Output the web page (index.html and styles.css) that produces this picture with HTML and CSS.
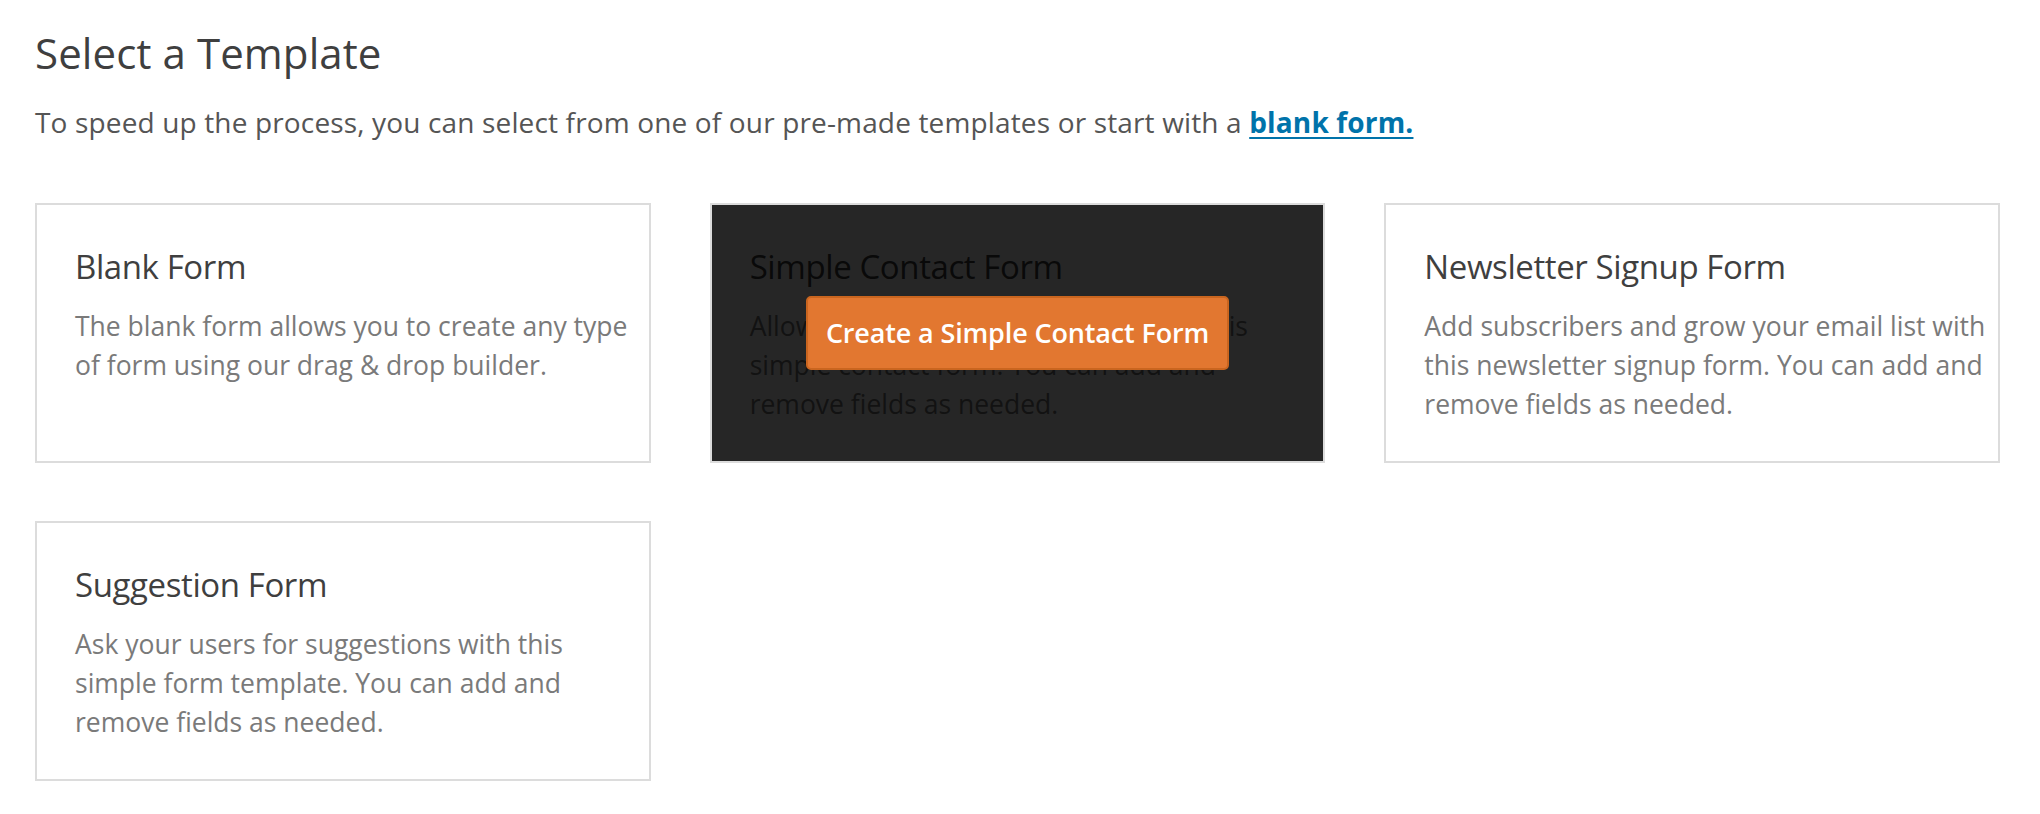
FILE: index.html
```html
<!DOCTYPE html>
<html lang="en">
  <head>
    <meta charset="UTF-8" />
    <meta name="viewport" content="width=device-width, initial-scale=1.0" />
    <title>Select a Template</title>
    <link rel="stylesheet" href="styles.css">
  </head>
  <body>
    <main class="page">
      <h1 class="page-title">Select a Template</h1>
      <p class="page-intro">
        To speed up the process, you can select from one of our pre-made templates or start with a
        <a href="#" class="blank-link">blank form.</a>
      </p>

      <section class="template-grid">
        <div class="template-card">
          <h3>Blank Form</h3>
          <p>The blank form allows you to create any type of form using our drag &amp; drop builder.</p>
        </div>

        <div class="template-card is-selected">
          <h3>Simple Contact Form</h3>
          <p>Allow your users to contact you with this simple contact form. You can add and remove fields as needed.</p>
          <div class="template-overlay">
            <button type="button">Create a Simple Contact Form</button>
          </div>
        </div>

        <div class="template-card">
          <h3>Newsletter Signup Form</h3>
          <p>Add subscribers and grow your email list with this newsletter signup form. You can add and remove fields as needed.</p>
        </div>

        <div class="template-card">
          <h3>Suggestion Form</h3>
          <p>Ask your users for suggestions with this simple form template. You can add and remove fields as needed.</p>
        </div>
      </section>
    </main>
  </body>
</html>
```

FILE: styles.css
```css
/* General Reset */
* {
  margin: 0;
  padding: 0;
  box-sizing: border-box;
}

body {
  background-color: #fff;
  font-family: "Open Sans", "Noto Sans", sans-serif;
  color: #444;
}

.page {
  padding: 25px 40px 0 35px;
}

/* Heading */
.page-title {
  font-size: 42px;
  font-weight: 400;
  line-height: 55px;
  color: #3f3f3f;
  letter-spacing: 0.1px;
}

.page-intro {
  margin-top: 23px;
  font-size: 28px;
  line-height: 38px;
  color: #555;
  letter-spacing: 0.15px;
}

.blank-link {
  color: #0073aa;
  font-weight: 700;
  text-decoration: underline;
  text-underline-offset: 4px;
  text-decoration-thickness: 2px;
}

/* Cards */
.template-grid {
  margin-top: 62px;
  display: grid;
  grid-template-columns: repeat(3, 1fr);
  column-gap: 59px;
  row-gap: 58px;
}

.template-card {
  position: relative;
  border: 2px solid #dcdcdc;
  padding: 42px 11px 37px 38px;
  background: #fff;
}

.template-card h3 {
  font-size: 33px;
  font-weight: 400;
  line-height: 40px;
  color: #3f3f3f;
  letter-spacing: -0.4px;
  margin-bottom: 20px;
}

.template-card p {
  font-size: 26.5px;
  line-height: 39px;
  color: #7a7a7a;
}

/* Hover overlay */
.template-overlay {
  position: absolute;
  top: 0;
  left: 0;
  right: 0;
  bottom: 0;
  background-color: rgba(0, 0, 0, 0.85);
  display: flex;
  align-items: center;
  justify-content: center;
}

.template-overlay button {
  font-family: "Open Sans", "Noto Sans", sans-serif;
  font-size: 27px;
  font-weight: 600;
  line-height: 38px;
  letter-spacing: -0.15px;
  color: #fff;
  background-color: #e27730;
  border: 2px solid #c9651f;
  border-radius: 5px;
  padding: 16px 18px;
  cursor: pointer;
}
```
